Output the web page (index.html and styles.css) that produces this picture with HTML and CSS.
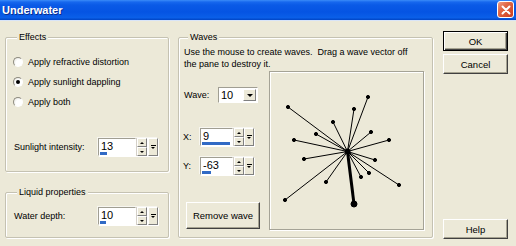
FILE: index.html
```html
<!DOCTYPE html>
<html lang="en">
<head>
  <meta charset="UTF-8" />
  <title>Underwater</title>
  <link rel="stylesheet" href="styles.css">
</head>
<body>
  <div class="window">
    <div class="titlebar">
      <span class="title">Underwater</span>
      <span class="close">
        <svg width="10" height="10" viewBox="0 0 10 10"><path d="M1.5 1.5 L8.5 8.5 M8.5 1.5 L1.5 8.5" stroke="#fff" stroke-width="2" stroke-linecap="round"/></svg>
      </span>
    </div>

    <div class="body">
      <div class="col-left">
        <div class="group effects">
          <span class="group-title">Effects</span>
          <label class="radio first"><span class="dot"></span>Apply refractive distortion</label>
          <label class="radio"><span class="dot checked"></span>Apply sunlight dappling</label>
          <label class="radio"><span class="dot"></span>Apply both</label>
          <div class="field-row sunlight">
            <span class="field-label">Sunlight intensity:</span>
            <div class="spin">
              <div class="spin-input wide">13<span class="level" style="width:7px"></span></div>
              <div class="spin-arrows"><span class="up"></span><span class="down"></span></div>
              <div class="spin-pop gap"><span class="bar"></span><span class="down"></span></div>
            </div>
          </div>
        </div>

        <div class="group liquid">
          <span class="group-title">Liquid properties</span>
          <div class="field-row depth">
            <span class="field-label">Water depth:</span>
            <div class="spin">
              <div class="spin-input wide">10<span class="level" style="width:6px"></span></div>
              <div class="spin-arrows"><span class="up"></span><span class="down"></span></div>
              <div class="spin-pop gap"><span class="bar"></span><span class="down"></span></div>
            </div>
          </div>
        </div>
      </div>

      <div class="group waves">
        <span class="group-title">Waves</span>
        <p class="hint">Use the mouse to create waves.&nbsp; Drag a wave vector off<br>the pane to destroy it.</p>
        <div class="waves-main">
          <div class="wave-controls">
            <div class="ctl-row wave-row">
              <span class="ctl-label wave-label">Wave:</span>
              <div class="combo">
                <span class="combo-value">10</span>
                <span class="combo-btn"><span class="down"></span></span>
              </div>
            </div>
            <div class="ctl-row x-row">
              <span class="ctl-label">X:</span>
              <div class="spin">
                <div class="spin-input">9<span class="level" style="width:28px"></span></div>
                <div class="spin-arrows"><span class="up"></span><span class="down"></span></div>
                <div class="spin-pop"><span class="bar"></span><span class="down"></span></div>
              </div>
            </div>
            <div class="ctl-row y-row">
              <span class="ctl-label">Y:</span>
              <div class="spin">
                <div class="spin-input">-63<span class="level" style="width:9px"></span></div>
                <div class="spin-arrows"><span class="up"></span><span class="down"></span></div>
                <div class="spin-pop"><span class="bar"></span><span class="down"></span></div>
              </div>
            </div>
            <button class="btn remove">Remove wave</button>
          </div>

          <div class="pane">
            <svg width="153" height="157" viewBox="270 72 153 157">
              <g stroke="#000" stroke-width="1" fill="#000">
                <line x1="347.5" y1="151.5" x2="288" y2="107"/>
                <line x1="347.5" y1="151.5" x2="368" y2="97"/>
                <line x1="347.5" y1="151.5" x2="354" y2="109"/>
                <line x1="347.5" y1="151.5" x2="333" y2="122"/>
                <line x1="347.5" y1="151.5" x2="316" y2="134"/>
                <line x1="347.5" y1="151.5" x2="371" y2="132"/>
                <line x1="347.5" y1="151.5" x2="294" y2="140"/>
                <line x1="347.5" y1="151.5" x2="389" y2="140"/>
                <line x1="347.5" y1="151.5" x2="304" y2="159"/>
                <line x1="347.5" y1="151.5" x2="375" y2="160"/>
                <line x1="347.5" y1="151.5" x2="369" y2="173"/>
                <line x1="347.5" y1="151.5" x2="361" y2="177"/>
                <line x1="347.5" y1="151.5" x2="326" y2="182"/>
                <line x1="347.5" y1="151.5" x2="399" y2="185"/>
                <line x1="347.5" y1="151.5" x2="285" y2="200"/>
                <line x1="347.5" y1="151.5" x2="354" y2="204" stroke-width="3"/>
                <circle cx="288" cy="107" r="1.6"/>
                <circle cx="368" cy="97" r="1.6"/>
                <circle cx="354" cy="109" r="1.6"/>
                <circle cx="333" cy="122" r="1.6"/>
                <circle cx="316" cy="134" r="1.6"/>
                <circle cx="371" cy="132" r="1.6"/>
                <circle cx="294" cy="140" r="1.6"/>
                <circle cx="389" cy="140" r="1.6"/>
                <circle cx="304" cy="159" r="1.6"/>
                <circle cx="375" cy="160" r="1.6"/>
                <circle cx="369" cy="173" r="1.6"/>
                <circle cx="361" cy="177" r="1.6"/>
                <circle cx="326" cy="182" r="1.6"/>
                <circle cx="399" cy="185" r="1.6"/>
                <circle cx="285" cy="200" r="1.6"/>
                <circle cx="354" cy="204" r="3"/>
                <circle cx="347.5" cy="151.5" r="2.5"/>
              </g>
            </svg>
          </div>
        </div>
      </div>

      <div class="col-buttons">
        <button class="btn default">OK</button>
        <button class="btn cancel">Cancel</button>
        <button class="btn help">Help</button>
      </div>
    </div>
  </div>
</body>
</html>
```

FILE: styles.css
```css
body {
  margin: 0;
  background: #ece9d8;
  font-family: "Liberation Sans", Arial, sans-serif;
  font-size: 9px;
  color: #000;
}
.window {
  width: 516px;
  height: 246px;
  overflow: hidden;
  background: #ece9d8;
}
.titlebar {
  height: 21px;
  display: flex;
  align-items: center;
  justify-content: space-between;
  box-sizing: border-box;
  padding: 0 2px 1px 2px;
  background: linear-gradient(#3a8cf8 0, #1768ee 2px, #0a5ae6 5px, #0554e3 60%, #0a5fe8 88%, #0044c4 100%);
  border-bottom: 1px solid #d8e4f8;
}
.title {
  color: #fff;
  font-size: 11px;
  font-weight: bold;
  text-shadow: 1px 1px 0 #0a2e8c;
}
.close {
  width: 17px;
  height: 17px;
  box-sizing: border-box;
  border: 1px solid #fff;
  border-radius: 3px;
  background: linear-gradient(135deg, #f0a088 0, #e26a48 35%, #cc3c1c 100%);
  display: flex;
  align-items: center;
  justify-content: center;
}

.body {
  display: flex;
  align-items: flex-start;
  padding: 10px 0 0 5px;
}
.col-left {
  width: 164px;
  margin-top: 6px;
}

/* etched group box */
.group {
  box-sizing: border-box;
  border: 1px solid #c5c2b2;
  border-radius: 2px;
  box-shadow: inset 1px 1px 0 #fff, 1px 1px 0 #fff;
  display: flex;
  flex-direction: column;
}
.group-title {
  align-self: flex-start;
  margin: -7px 0 0 4px;
  padding: 0 2px;
  line-height: 12px;
  background: #ece9d8;
}
.effects {
  height: 135px;
  padding-left: 7px;
}
.liquid {
  height: 46px;
  margin-top: 20px;
  padding-left: 7px;
}
.waves {
  width: 255px;
  height: 201px;
  margin: 6px 0 0 9px;
  padding-left: 5px;
}

.radio {
  display: flex;
  align-items: center;
  height: 20px;
}
.radio.first {
  margin-top: 9px;
}
.dot {
  width: 10px;
  height: 10px;
  box-sizing: border-box;
  border-radius: 50%;
  border: 1px solid;
  border-color: #8e8c80 #fff #fff #8e8c80;
  background: radial-gradient(circle at 65% 65%, #fff 0, #fff 45%, #dcdad0 100%);
  margin-right: 5px;
  display: flex;
  align-items: center;
  justify-content: center;
}
.dot.checked::after {
  content: "";
  width: 4px;
  height: 4px;
  border-radius: 50%;
  background: #000;
}

.field-row {
  display: flex;
  align-items: center;
}
.field-row.sunlight {
  margin-top: 26px;
}
.field-row.depth {
  margin-top: 9px;
}
.field-label {
  width: 85px;
  padding-left: 1px;
  box-sizing: border-box;
}

/* spin edit with slider popup button */
.spin {
  display: flex;
  height: 18px;
  box-sizing: border-box;
  background: #fff;
  box-shadow: 1px 1px 0 #fff, -1px -1px 0 #f7f6f0;
}
.spin-input {
  position: relative;
  width: 33px;
  box-sizing: border-box;
  border: 1px solid;
  border-color: #a09e92 #fff #fff #a09e92;
  background: #fff;
  font-size: 11px;
  line-height: 15px;
  padding-left: 2px;
}
.spin-input.wide {
  width: 38px;
}
.level {
  position: absolute;
  left: 1px;
  bottom: 0;
  height: 3px;
  background: #316ac5;
}
.spin-arrows {
  width: 10px;
  display: flex;
  flex-direction: column;
  border-left: 1px solid #d4d0c8;
}
.spin-arrows span,
.spin-pop {
  background: #ece9d8;
  box-sizing: border-box;
  border: 1px solid;
  border-color: #fff #808080 #808080 #fff;
  display: flex;
  align-items: center;
  justify-content: center;
}
.spin-arrows span {
  flex: 1;
}
.spin-pop {
  width: 10px;
  flex-direction: column;
  gap: 1px;
}
.spin-pop.gap {
  margin-left: 1px;
}
.up,
.down {
  display: flex;
}
.up::before,
.down::before {
  content: "";
  border-left: 2px solid transparent;
  border-right: 2px solid transparent;
}
.up::before {
  border-bottom: 2px solid #000;
}
.down::before {
  border-top: 2px solid #000;
}
.bar {
  width: 5px;
  height: 1px;
  background: #000;
}

.hint {
  margin: 3px 0 0 0;
  line-height: 12px;
}
.waves-main {
  display: flex;
  margin-top: 1px;
}
.wave-controls {
  width: 85px;
  display: flex;
  flex-direction: column;
  align-items: flex-start;
}
.ctl-row {
  display: flex;
  align-items: center;
}
.ctl-label {
  width: 17px;
  margin-left: -1px;
}
.wave-label {
  width: 34px;
  margin-left: 0;
}
.wave-row {
  margin-top: 16px;
}
.x-row {
  margin-top: 25px;
}
.y-row {
  margin-top: 11px;
}
.combo {
  width: 40px;
  height: 16px;
  box-sizing: border-box;
  display: flex;
  border: 1px solid;
  border-color: #a09e92 #fff #fff #a09e92;
  background: #fff;
  padding: 1px;
}
.combo-value {
  flex: 1;
  font-size: 11px;
  line-height: 12px;
  padding-left: 1px;
}
.combo-btn {
  width: 13px;
  box-sizing: border-box;
  background: #ece9d8;
  border: 1px solid;
  border-color: #fff #808080 #808080 #fff;
  display: flex;
  align-items: center;
  justify-content: center;
}
.combo-btn .down::before {
  border-left-width: 3px;
  border-right-width: 3px;
  border-top-width: 3px;
}

.pane {
  width: 155px;
  height: 159px;
  box-sizing: border-box;
  border: 1px solid #a5a396;
  box-shadow: 1px 1px 0 #fff, inset 1px 1px 0 #fff;
}
.pane svg {
  display: block;
}

.btn {
  font-family: "Liberation Sans", Arial, sans-serif;
  font-size: 9.5px;
  color: #000;
  background: #ece9d8;
  box-sizing: border-box;
  border: 1px solid;
  border-color: #fff #404040 #404040 #fff;
  box-shadow: inset -1px -1px 0 #a6a391;
  padding: 0;
  display: block;
}
.btn.remove {
  width: 74px;
  height: 27px;
  margin: 27px 0 0 2px;
}
.col-buttons {
  width: 65px;
  margin-left: 10px;
}
.col-buttons .btn {
  width: 65px;
  height: 20px;
}
.btn.default {
  border: 1px solid #000;
  box-shadow: inset 1px 1px 0 #fff, inset -1px -1px 0 #404040, inset -2px -2px 0 #a6a391;
}
.btn.cancel {
  margin-top: 3px;
}
.btn.help {
  margin-top: 145px;
}
```
